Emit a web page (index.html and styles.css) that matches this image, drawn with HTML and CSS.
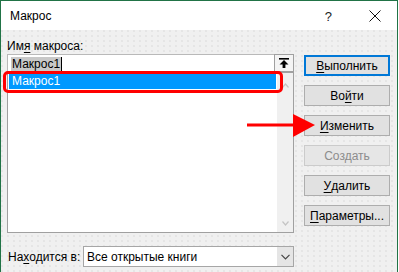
FILE: index.html
```html
<!DOCTYPE html>
<html lang="ru">
<head>
<meta charset="utf-8">
<title>Макрос</title>
<link rel="stylesheet" href="styles.css">
</head>
<body>
<div class="window">
  <div class="titlebar">
    <span class="title">Макрос</span>
    <span class="help">?</span>
    <span class="close">
      <svg width="12" height="12" viewBox="0 0 12 12"><path d="M0.5 0.5 L11.5 11.5 M11.5 0.5 L0.5 11.5" stroke="#111" stroke-width="1" fill="none"/></svg>
    </span>
  </div>
  <div class="client">
    <div class="main">
      <div class="left">
        <div class="label">Им<u>я</u> макроса:</div>
        <div class="namerow">
          <div class="namefield"><span class="sel">Макрос1</span><span class="caret"></span></div>
          <div class="upbtn">
            <svg width="10" height="10" viewBox="0 0 10 10"><rect x="0" y="0" width="10" height="1.6" fill="#000"/><path d="M5 2 L9.5 6.5 L6.4 6.5 L6.4 10 L3.6 10 L3.6 6.5 L0.5 6.5 Z" fill="#000"/></svg>
          </div>
        </div>
        <div class="list">
          <div class="items">
            <div class="item selected">Макрос1</div>
          </div>
          <div class="scroll">
            <svg width="7" height="5" viewBox="0 0 7 5"><path d="M0.5 4.5 L3.5 1 L6.5 4.5" stroke="#c4c4c4" stroke-width="1.2" fill="none"/></svg>
            <svg width="7" height="5" viewBox="0 0 7 5"><path d="M0.5 0.5 L3.5 4 L6.5 0.5" stroke="#c4c4c4" stroke-width="1.2" fill="none"/></svg>
          </div>
        </div>
      </div>
      <div class="buttons">
        <div class="btn default"><u>В</u>ыполнить</div>
        <div class="btn">Во<u>й</u>ти</div>
        <div class="btn"><u>И</u>зменить</div>
        <div class="btn disabled">Создать</div>
        <div class="btn"><u>У</u>далить</div>
        <div class="btn"><u>П</u>араметры...</div>
      </div>
    </div>
    <div class="location">
      <span class="loclabel">На<u>х</u>одится в:</span>
      <div class="select">
        <span class="seltext">Все открытые книги</span>
        <div class="drop">
          <svg width="9" height="6" viewBox="0 0 9 6"><path d="M0.5 0.8 L4.5 4.8 L8.5 0.8" stroke="#444" stroke-width="1.2" fill="none"/></svg>
        </div>
      </div>
    </div>
  </div>
  <div class="highlight"></div>
  <svg class="arrow" width="72" height="26" viewBox="0 0 72 26"><line x1="1" y1="12" x2="50" y2="12" stroke="#f00" stroke-width="3"/><path d="M47 1 L69 12 L47 24 Z" fill="#f00"/></svg>
</div>
</body>
</html>
```
FILE: styles.css
```css
html, body {
  margin: 0;
  padding: 0;
  background: #ffffff;
}
body {
  font-family: "Liberation Sans", Arial, sans-serif;
  font-size: 12px;
  color: #000;
}
u {
  text-decoration: underline;
  text-underline-offset: 2px;
}
.window {
  position: relative;
  width: 396px;
  height: 271px;
  border: 1px solid #217346;
  border-bottom: none;
  background: #f0f0f0;
  overflow: hidden;
}
.titlebar {
  height: 29px;
  background: #fff;
  display: flex;
  align-items: center;
}
.title {
  margin-left: 9px;
  font-size: 12px;
  flex: 1;
  padding-top: 1px;
}
.help {
  font-size: 13px;
  color: #222;
  margin-right: 37px;
  padding-top: 1px;
}
.close {
  display: flex;
  margin-right: 16px;
}
.client {
  height: 242px;
  padding: 8px 0 0 6px;
  box-sizing: border-box;
  background-color: #f0f0f0;
  background-image: radial-gradient(circle at 1px 1px, #e2e2e2 0.6px, transparent 1px);
  background-size: 6px 5px;
}
.main {
  display: flex;
  gap: 10px;
}
.left {
  width: 287px;
  display: flex;
  flex-direction: column;
}
.label {
  line-height: 16px;
  height: 16px;
}
.namerow {
  display: flex;
  height: 18px;
}
.namefield {
  flex: 1;
  background: #fff;
  border: 1px solid #b9b9b9;
  border-right: none;
  border-bottom: none;
  display: flex;
  align-items: center;
  padding-left: 3px;
}
.sel {
  background: #c8c8c8;
  line-height: 14px;
  padding: 0 1px 0 1px;
}
.caret {
  width: 1px;
  height: 14px;
  background: #000;
}
.upbtn {
  width: 18px;
  height: 16px;
  border: 1px solid #a0a0a0;
  background: #f4f4f4;
  display: flex;
  align-items: center;
  justify-content: center;
}
.list {
  height: 161px;
  border: 1px solid #a0a0a0;
  box-sizing: border-box;
  display: flex;
  background: #fff;
}
.items {
  flex: 1;
  padding: 1px;
}
.item {
  line-height: 15px;
  height: 15px;
  padding-left: 3px;
}
.item.selected {
  background: #0099ff;
  color: #fff;
}
.scroll {
  width: 16px;
  background: #f0f0f0;
  display: flex;
  flex-direction: column;
  justify-content: space-between;
  align-items: center;
  padding: 10px 0 6px 1px;
  box-sizing: border-box;
}
.buttons {
  width: 86px;
  padding-top: 17px;
  display: flex;
  flex-direction: column;
  gap: 9px;
}
.btn {
  height: 21px;
  box-sizing: border-box;
  border: 1px solid #adadad;
  background: #e1e1e1;
  display: flex;
  align-items: center;
  justify-content: center;
  line-height: 14px;
}
.btn.default {
  border: 2px solid #0078d7;
}
.btn.disabled {
  color: #8c8c8c;
  border-color: #cbcbcb;
  background: #e6e6e6;
}
.location {
  display: flex;
  align-items: center;
  margin-top: 13px;
}
.loclabel {
  width: 75px;
  margin-left: 1px;
  padding-top: 1px;
}
.select {
  width: 211px;
  height: 21px;
  box-sizing: border-box;
  border: 1px solid #a6a6a6;
  background: #fff;
  display: flex;
  align-items: center;
}
.seltext {
  flex: 1;
  padding-left: 3px;
  padding-top: 1px;
}
.drop {
  width: 16px;
  height: 19px;
  background: #e5e5e5;
  display: flex;
  align-items: center;
  justify-content: center;
}
.highlight {
  position: absolute;
  left: 2px;
  top: 70px;
  width: 280px;
  height: 22px;
  box-sizing: border-box;
  border: 3px solid #f00;
  border-radius: 5px;
}
.arrow {
  position: absolute;
  left: 245px;
  top: 112px;
}
```
